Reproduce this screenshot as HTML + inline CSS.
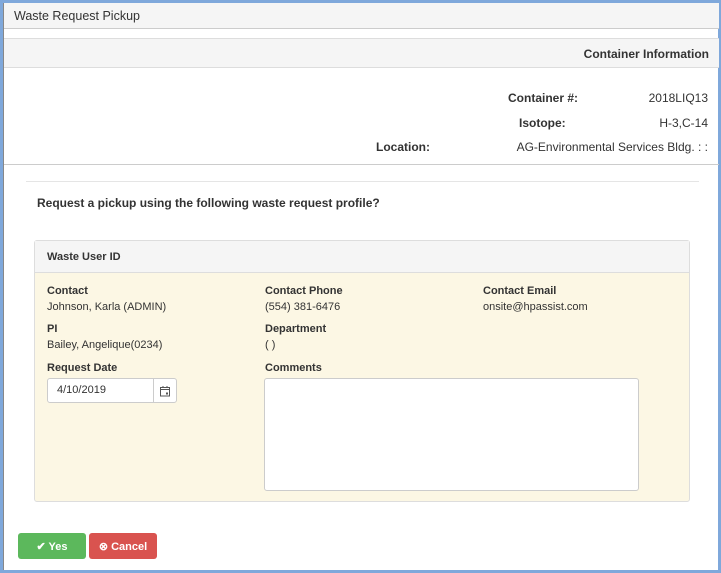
<!DOCTYPE html>
<html><head><style>
*{box-sizing:border-box;margin:0;padding:0}
body{width:721px;height:573px;background:#7fa8db;font-family:"Liberation Sans",Arial,sans-serif;color:#333;position:relative;overflow:hidden}
.dlg{position:absolute;left:3px;top:3px;width:715px;height:567px;background:#fff;border-left:1px solid #888}
.abs{position:absolute}
.title{left:0;top:0;width:715px;height:26px;background:#f5f5f5;border-bottom:1px solid #ccc;font-size:12.5px;padding:6px 0 0 10px}
.ch{left:0;top:35px;width:715px;height:30px;background:#f5f5f5;border-top:1px solid #ddd;border-bottom:1px solid #ddd;font-size:12px;font-weight:bold;text-align:right;padding:8px 10px 0 0}
.b12{font-size:12px;font-weight:bold}
.t12{font-size:12px}
.t11{font-size:11px}
.b11{font-size:11px;font-weight:bold}
.panel{left:30px;top:237px;width:656px;height:262px;background:#fcf7e4;border:1px solid #ddd;border-radius:3px}
.ph{left:0;top:0;width:654px;height:32px;background:#f5f5f5;border-bottom:1px solid #ddd;padding:10px 0 0 12px}
.btn{top:530px;height:26px;border-radius:3px;color:#fff;font-size:11px;font-weight:bold;text-align:center;padding-top:7px}
</style></head><body>
<div class="dlg">
<div class="abs title">Waste Request Pickup</div>
<div class="abs ch">Container Information</div>
<div class="abs b12" style="left:504px;top:88px">Container #:</div>
<div class="abs t12" style="right:10px;top:88px">2018LIQ13</div>
<div class="abs b12" style="left:515px;top:113px">Isotope:</div>
<div class="abs t12" style="right:10px;top:113px">H-3,C-14</div>
<div class="abs b12" style="left:372px;top:137px">Location:</div>
<div class="abs t12" style="right:10px;top:137px">AG-Environmental Services Bldg. : :</div>
<div class="abs" style="left:0;top:161px;width:715px;border-top:1px solid #ccc"></div>
<div class="abs" style="left:22px;top:178px;width:673px;border-top:1px solid #e5e5e5"></div>
<div class="abs b12" style="left:33px;top:193px">Request a pickup using the following waste request profile?</div>
<div class="abs panel">
<div class="abs ph b11">Waste User ID</div>
<div class="abs b11" style="left:12px;top:44px">Contact</div>
<div class="abs t11" style="left:12px;top:60px">Johnson, Karla (ADMIN)</div>
<div class="abs b11" style="left:230px;top:44px">Contact Phone</div>
<div class="abs t11" style="left:230px;top:60px">(554) 381-6476</div>
<div class="abs b11" style="left:448px;top:44px">Contact Email</div>
<div class="abs t11" style="left:448px;top:60px">onsite@hpassist.com</div>
<div class="abs b11" style="left:12px;top:82px">PI</div>
<div class="abs t11" style="left:12px;top:98px">Bailey, Angelique(0234)</div>
<div class="abs b11" style="left:230px;top:82px">Department</div>
<div class="abs t11" style="left:230px;top:98px">( )</div>
<div class="abs b11" style="left:12px;top:121px">Request Date</div>
<div class="abs b11" style="left:230px;top:121px">Comments</div>
<div class="abs" style="left:12px;top:137px;width:130px;height:25px;background:#fff;border:1px solid #ccc;border-radius:3px"></div>
<div class="abs t11" style="left:22px;top:143px">4/10/2019</div>
<div class="abs" style="left:118px;top:137px;width:1px;height:25px;background:#ccc"></div>
<svg class="abs" style="left:124px;top:144px" width="12" height="12" viewBox="0 0 12 12"><rect x="1.5" y="2.5" width="9" height="8.5" fill="none" stroke="#555"/><line x1="1.5" y1="4.5" x2="10.5" y2="4.5" stroke="#555"/><line x1="4" y1="1" x2="4" y2="3" stroke="#555"/><line x1="8" y1="1" x2="8" y2="3" stroke="#555"/><rect x="7" y="7.5" width="2" height="2" fill="#555"/></svg>
<div class="abs" style="left:229px;top:137px;width:375px;height:113px;background:#fff;border:1px solid #ccc;border-radius:3px"></div>
</div>
<div class="abs btn" style="left:14px;width:68px;background:#5cb85c">&#10004; Yes</div>
<div class="abs btn" style="left:85px;width:68px;background:#d9534f">&#8855; Cancel</div>
</div>
</body></html>
